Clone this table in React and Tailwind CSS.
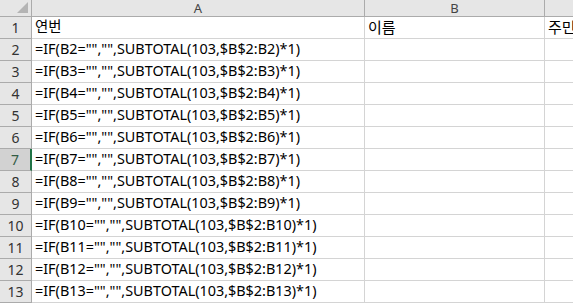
import React from 'react'

const rows = [
  { n: 1, a: '연번', b: '이름', c: '주민' },
  ...Array.from({ length: 12 }, (_, i) => {
    const r = i + 2
    return { n: r, a: `=IF(B${r}="","",SUBTOTAL(103,$B$2:B${r})*1)`, b: '', c: '' }
  }),
]

export default function App() {
  return (
    <div
      className="w-[573px] h-[306px] overflow-hidden bg-white text-[#000] text-[15px]"
      style={{ fontFamily: '"Noto Sans", "Noto Sans CJK KR", sans-serif' }}
    >
      {/* column headers */}
      <div className="flex h-[17px] bg-[#e6e6e6] border-b border-[#ababab]">
        <div className="relative w-[32px] shrink-0 border-r border-[#ababab]">
          <div className="absolute right-[3px] bottom-[3px] w-0 h-0 border-l-[11px] border-l-transparent border-b-[11px] border-b-[#b4b4b4]" />
        </div>
        <div className="w-[333px] shrink-0 border-r border-[#ababab] flex items-center justify-center text-[13px] text-[#444] leading-none">A</div>
        <div className="w-[180px] shrink-0 border-r border-[#ababab] flex items-center justify-center text-[13px] text-[#444] leading-none">B</div>
        <div className="flex-1" />
      </div>

      {rows.map((row) => {
        const sel = row.n === 7
        return (
          <div key={row.n} className="flex h-[22px]">
            <div
              className={
                sel
                  ? 'w-[32px] shrink-0 bg-[#d2d2d2] border-b border-[#ababab] border-r-2 border-r-[#217346] flex items-center justify-center text-[14px] text-[#335c45] leading-none'
                  : 'w-[32px] shrink-0 bg-[#e6e6e6] border-b border-r border-[#ababab] flex items-center justify-center text-[14px] text-[#333] leading-none'
              }
            >
              {row.n}
            </div>
            <div className="w-[333px] shrink-0 border-r border-b border-[#d4d4d4] pl-[3px] flex items-center whitespace-nowrap overflow-hidden leading-none text-[14.4px]">
              {row.a}
            </div>
            <div className="w-[180px] shrink-0 border-r border-b border-[#d4d4d4] pl-[3px] flex items-center whitespace-nowrap overflow-hidden leading-none">
              {row.b}
            </div>
            <div className="flex-1 border-b border-[#d4d4d4] pl-[3px] flex items-center whitespace-nowrap overflow-hidden leading-none">
              {row.c}
            </div>
          </div>
        )
      })}
    </div>
  )
}
